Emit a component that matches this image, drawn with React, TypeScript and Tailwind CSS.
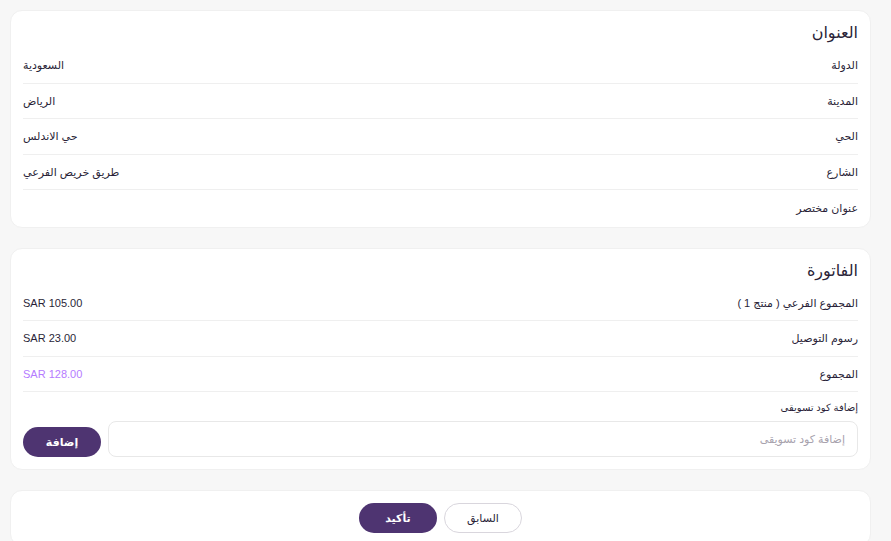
import React from 'react';

const addressRows = [
  { label: 'الدولة', value: 'السعودية' },
  { label: 'المدينة', value: 'الرياض' },
  { label: 'الحي', value: 'حي الاندلس' },
  { label: 'الشارع', value: 'طريق خريص الفرعي' },
  { label: 'عنوان مختصر', value: '' },
];

const invoiceRows = [
  { label: 'المجموع الفرعي ( منتج 1 )', value: 'SAR 105.00', highlight: false },
  { label: 'رسوم التوصيل', value: 'SAR 23.00', highlight: false },
  { label: 'المجموع', value: 'SAR 128.00', highlight: true },
];

const Row: React.FC<{ label: string; value: string; highlight?: boolean; last?: boolean }> = ({
  label,
  value,
  highlight,
  last,
}) => (
  <div className={`flex items-center justify-between h-[35.5px] ${last ? '' : 'border-b border-[#efefef]'}`}>
    <span className="text-[11px] text-[#2a1f38]">{label}</span>
    <span className={`text-[11px] ${highlight ? 'text-[#b57bff]' : 'text-[#2a1f38]'}`}>{value}</span>
  </div>
);

export default function App() {
  return (
    <div
      dir="rtl"
      className="min-h-[541px] bg-[#f7f7f7] pt-[10px] pl-[10px] pr-[20px] flex flex-col gap-[20px]"
      style={{ fontFamily: '"Liberation Sans", "DejaVu Sans", sans-serif' }}
    >
      <div className="bg-white rounded-[12px] border border-[#f0f0f0] px-[12px] pt-[12px] pb-[1px]">
        <h2 className="text-[16px] text-[#2a1f38] leading-[20px] mb-[5px]">العنوان</h2>
        {addressRows.map((r, i) => (
          <Row key={r.label} label={r.label} value={r.value} last={i === addressRows.length - 1} />
        ))}
      </div>

      <div className="bg-white rounded-[12px] border border-[#f0f0f0] px-[12px] pt-[12px] pb-[12px]">
        <h2 className="text-[16px] text-[#2a1f38] leading-[20px] mb-[5px]">الفاتورة</h2>
        {invoiceRows.map((r) => (
          <Row key={r.label} label={r.label} value={r.value} highlight={r.highlight} />
        ))}
        <div className="mt-[9px] text-[10px] text-[#2a1f38] leading-[14px]">إضافة كود تسويقى</div>
        <div className="flex items-end gap-[7px] mt-[6px]">
          <input
            className="flex-1 h-[36px] rounded-[8px] border border-[#e8e8e8] px-[12px] text-[11px] placeholder:text-[#a7a2ad] outline-none"
            placeholder="إضافة كود تسويقى"
          />
          <button className="w-[78px] h-[30px] rounded-full bg-[#4e3471] text-white text-[11px] font-bold">إضافة</button>
        </div>
      </div>

      <div className="bg-white rounded-[12px] border border-[#f0f0f0] pt-[12px] pb-[12px] flex justify-center gap-[7px]">
        <button className="w-[78px] h-[30px] rounded-full border border-[#d9d6dd] bg-white text-[#2a1f38] text-[11px]">السابق</button>
        <button className="w-[78px] h-[30px] rounded-full bg-[#4e3471] text-white text-[11px] font-bold">تأكيد</button>
      </div>
    </div>
  );
}
